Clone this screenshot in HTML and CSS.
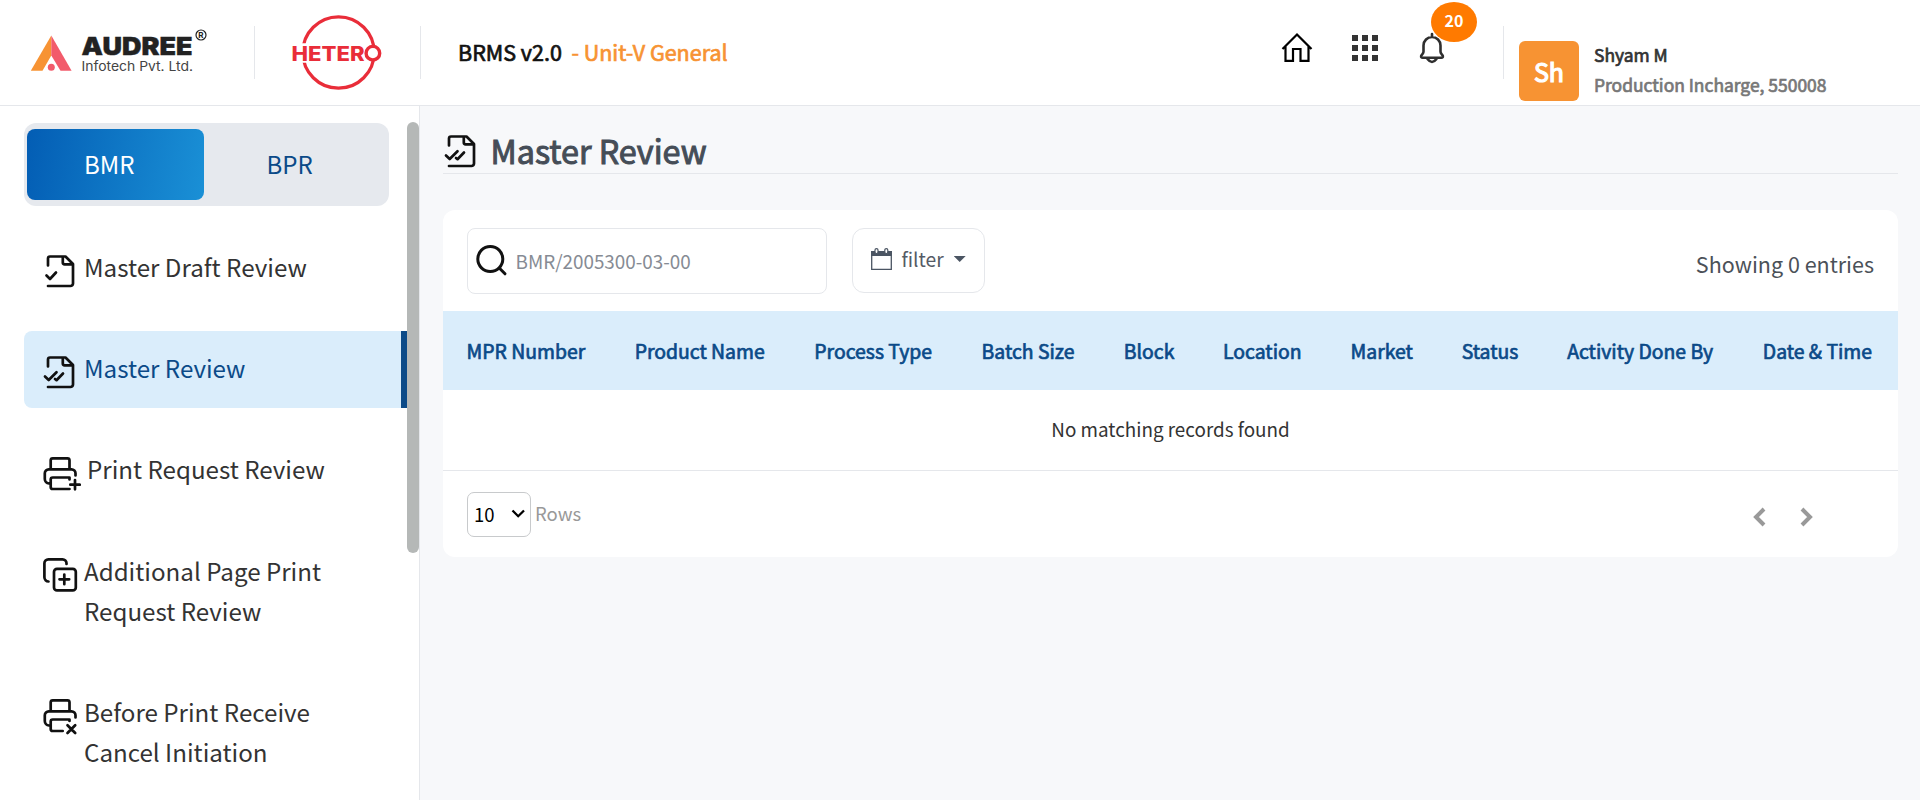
FILE: index.html
```html
<!DOCTYPE html>
<html lang="en">
<head>
<meta charset="utf-8">
<title>Master Review</title>
<link rel="stylesheet" href="styles.css">
</head>
<body>
<header class="topbar">
  <div class="brand">
    <svg class="audree" width="180" height="50" viewBox="28 26 180 50">
      <path d="M51.300 35.500L30.800 70.700H42.500L51.300 55.500Z" fill="#f79333"/>
      <path d="M51.300 35.500L71.600 70.700H60.500L51.300 55.500Z" fill="#f25b6b"/>
      <circle cx="51.300" cy="67.300" r="3.500" fill="#f25b6b"/>
      <text class="audree-name" x="81.500" y="54.500" textLength="111" lengthAdjust="spacingAndGlyphs">AUDREE</text>
      <text class="audree-sub" x="81.500" y="70.700" textLength="111.500" lengthAdjust="spacingAndGlyphs">Infotech Pvt. Ltd.</text>
      <circle cx="201" cy="35" r="5" fill="none" stroke="#222" stroke-width="1.200"/>
      <text class="audree-reg" x="201" y="38" text-anchor="middle">R</text>
    </svg>
  </div>
  <div class="brand brand-hetero">
    <svg width="92" height="78" viewBox="290 13 92 78">
      <circle cx="338.500" cy="52.500" r="35.700" fill="none" stroke="#e92d39" stroke-width="3.200"/>
      <path d="M290 43.200H364V62.800H290Z" fill="#fff"/>
      <text class="hetero-name" x="291.500" y="60.800" textLength="73" lengthAdjust="spacingAndGlyphs">HETER</text>
      <circle cx="372.900" cy="53.200" r="6.800" fill="#fff" stroke="#e92d39" stroke-width="3.400"/>
    </svg>
  </div>
  <div class="product"><span class="t-brms">BRMS v2.0</span><span class="t-unit">- Unit-V General</span></div>
  <nav class="tools">
    <svg class="tool" width="32" height="32" viewBox="0 0 32 32" fill="none" stroke="#000" stroke-width="2.200"><path d="M1.500 17L16 2.500L30.500 17M4.500 14V28.800H12V17H19.500V28.800H27.500V14"/></svg>
    <svg class="tool" width="26" height="26" viewBox="0 0 26 26" fill="#333"><path d="M0 0h6v6H0zM10 0h6v6h-6zM20 0h6v6h-6zM0 10h6v6H0zM10 10h6v6h-6zM20 10h6v6h-6zM0 20h6v6H0zM10 20h6v6h-6zM20 20h6v6h-6z"/></svg>
    <div class="bell">
      <svg width="26" height="32" viewBox="0 0 26 32" fill="none" stroke="#2f2f2f" stroke-width="2.600" stroke-linecap="round" stroke-linejoin="round"><path d="M13 2V5M4.500 19.500V13.500a8.500 8.500 0 0 1 17 0V19.500q0 1.200 1 2.500l1.300 1.800q.5 2-1.500 2H3.700q-2 0-1.500-2L3.500 22q1-1.300 1-2.500ZM8.500 27q4.500 6 9 0"/></svg>
      <span class="badge">20</span>
    </div>
  </nav>
  <div class="user">
    <div class="avatar">Sh</div>
    <div class="who"><div><span class="t-name">Shyam M</span></div><div><span class="t-role">Production Incharge, 550008</span></div></div>
  </div>
</header>
<div class="body">
  <aside class="side">
    <div class="side-main">
      <div class="toggle"><div class="tab tab-on"><span>BMR</span></div><div class="tab"><span>BPR</span></div></div>
      <ul class="menu">
        <li class="item">
          <svg class="ico" width="36" height="36" viewBox="0 0 36 36"><path d="M6 12.500V5.500a2 2 0 0 1 2-2H23.500L31 11V30.500a2.500 2.500 0 0 1-2.500 2.500H6M20.800 4V9.500a1.800 1.800 0 0 0 1.800 1.800H30.500M4.500 22.500L8 26L14 19.500"/></svg>
          <span class="lbl">Master Draft Review</span>
        </li>
        <li class="item item-on">
          <svg class="ico" width="36" height="36" viewBox="0 0 36 36"><path d="M6 12.500V5.500a2 2 0 0 1 2-2H23.500L31 11V30.500a2.500 2.500 0 0 1-2.500 2.500H6M20.800 4V9.500a1.800 1.800 0 0 0 1.800 1.800H30.500M3 22.500L6.700 26L14.500 18.200M13 25L14.500 26.200L21 19.500"/></svg>
          <span class="lbl">Master Review</span>
        </li>
        <li class="item">
          <svg class="ico" width="39" height="36" viewBox="0 0 39 36"><path d="M8.700 14.300V5.300a2 2 0 0 1 2-2H25.500a2 2 0 0 1 2 2V14.300M7 28.500a4.500 4.500 0 0 1-4.200-4.500V18.300a4 4 0 0 1 4-4H29.500a4 4 0 0 1 4 4V20.500M27.500 24.500V22.500H10.700a2 2 0 0 0-2 2V32a2 2 0 0 0 2 2H27.500M33 25V34.300M28.300 29.700H37.700"/></svg>
          <span class="lbl">Print Request Review</span>
        </li>
        <li class="item item-tall">
          <svg class="ico" width="36" height="36" viewBox="0 0 36 36"><path d="M6.500 25.500a4.300 4.300 0 0 1-4.100-4.200V7.300a4 4 0 0 1 4-4H20.500a4 4 0 0 1 4 4V8M22.300 18.500V28.200M17.500 23.300H27.200"/><rect x="12" y="12.800" width="21.800" height="21.600" rx="3"/></svg>
          <span class="lbl">Additional Page Print<br>Request Review</span>
        </li>
        <li class="item item-tall">
          <svg class="ico" width="36" height="38" viewBox="0 0 36 38"><path d="M8.700 14.300V5.300a2 2 0 0 1 2-2H25.500a2 2 0 0 1 2 2V14.300M7 28.500a4.500 4.500 0 0 1-4.200-4.500V18.300a4 4 0 0 1 4-4H29.500a4 4 0 0 1 4 4V20.500M27.500 24V22.500H10.700a2 2 0 0 0-2 2V32a2 2 0 0 0 2 2H20.700M25.500 28.200L33.200 36M33.200 28.200L25.500 36"/></svg>
          <span class="lbl">Before Print Receive<br>Cancel Initiation</span>
        </li>
      </ul>
    </div>
    <div class="scroll"><div class="thumb"></div></div>
  </aside>
  <main class="main">
    <div class="title">
      <svg class="ico" width="36" height="36" viewBox="0 0 36 36"><path d="M6 12.500V5.500a2 2 0 0 1 2-2H23.500L31 11V30.500a2.500 2.500 0 0 1-2.500 2.500H6M20.800 4V9.500a1.800 1.800 0 0 0 1.800 1.800H30.500M3 22.500L6.700 26L14.500 18.200M13 25L14.500 26.200L21 19.500"/></svg>
      <h1>Master Review</h1>
    </div>
    <section class="card">
      <div class="controls">
        <div class="search">
          <svg width="32" height="32" viewBox="0 0 32 32" fill="none" stroke="#111" stroke-width="3" stroke-linecap="round"><circle cx="14.300" cy="14" r="12.500"/><path d="M23.500 23.300L29 28.800"/></svg>
          <span class="t-ph">BMR/2005300-03-00</span>
        </div>
        <div class="filter">
          <svg width="21" height="23" viewBox="0 0 21 23"><path d="M.700 4h19.600V21.300H.700Z" fill="none" stroke="#4b5563" stroke-width="1.300"/><path d="M0 3h21v5H0z" fill="#4b5563"/><rect x="4" y=".600" width="3" height="5" rx="1.500" fill="#fff" stroke="#4b5563" stroke-width="1.200"/><rect x="13.800" y=".600" width="3" height="5" rx="1.500" fill="#fff" stroke="#4b5563" stroke-width="1.200"/></svg>
          <span class="t-filter">filter</span>
          <i class="caret"></i>
        </div>
        <span class="t-show">Showing 0 entries</span>
      </div>
      <table class="grid">
        <thead><tr><th>MPR Number</th><th>Product Name</th><th>Process Type</th><th>Batch Size</th><th>Block</th><th>Location</th><th>Market</th><th>Status</th><th>Activity Done By</th><th>Date &amp; Time</th></tr></thead>
        <tbody><tr><td colspan="10">No matching records found</td></tr></tbody>
      </table>
      <div class="pager">
        <div class="select"><span>10</span><svg width="14" height="10" viewBox="0 0 14 10" fill="none" stroke="#000" stroke-width="2.300"><path d="M1.500 1.500L7.200 7.200L13 1.500"/></svg></div>
        <span class="t-rows">Rows</span>
        <div class="arrows">
          <svg width="14" height="20" viewBox="0 0 14 20"><path d="M12 2L4 10L12 18"/></svg>
          <svg width="14" height="20" viewBox="0 0 14 20"><path d="M2 2L10 10L2 18"/></svg>
        </div>
      </div>
    </section>
  </main>
</div>
</body>
</html>
```
FILE: styles.css
```css
* { box-sizing: border-box; }
body {
  margin: 0;
  height: 800px;
  overflow: hidden;
  display: flex;
  flex-direction: column;
  background: #f7f8fa;
  color: #333;
  font-family: "Noto Sans CJK SC", "Noto Sans", sans-serif;
  white-space: nowrap;
}
.topbar {
  flex: none;
  height: 106px;
  display: flex;
  align-items: flex-start;
  background: #fff;
  border-bottom: 1px solid #e5e7eb;
}
.brand {
  width: 255px;
  height: 53px;
  margin-top: 26px;
  padding-left: 28px;
  border-right: 1px solid #e5e7eb;
}
.brand svg { display: block; }
.brand-hetero { width: 166px; padding-left: 35px; }
.brand-hetero svg { margin-top: -13px; }
.audree-name { font: 900 24.500px Inter, sans-serif; fill: #222; stroke: #222; stroke-width: .4px; }
.audree-sub { font: 400 13.300px Inter, sans-serif; fill: #444; }
.audree-reg { font: 700 8px Inter, sans-serif; fill: #222; }
.hetero-name { font: 800 20.200px Inter, sans-serif; fill: #e92d39; }
.product {
  width: 823px;
  padding-left: 37px;
  margin-top: 37px;
  display: flex;
  gap: 9.500px;
  font-size: 21.500px;
  line-height: 30px;
  color: #111;
}
.t-brms, .t-unit, .t-name, .t-role { -webkit-text-stroke: .7px currentColor; }
.t-unit { color: #f79333; }
.tools {
  width: 260px;
  height: 53px;
  margin-top: 26px;
  padding-left: 37px;
  border-right: 1px solid #e5e7eb;
  display: flex;
}
.tool { margin-top: 6px; }
.tool + .tool { margin: 9px 0 0 39px; }
.bell { position: relative; margin: 6px 0 0 41px; }
.badge {
  position: absolute;
  left: 12px;
  top: -30px;
  width: 46px;
  height: 40px;
  border-radius: 50%;
  background: #ff7a00;
  color: #fff;
  font-size: 16px;
  font-weight: 700;
  line-height: 36px;
  text-align: center;
}
.user { display: flex; padding-left: 15px; margin-top: 41px; }
.avatar {
  width: 60px;
  height: 60px;
  border-radius: 6px;
  background: #f79333;
  color: #fff;
  font-size: 25px;
  -webkit-text-stroke: 1.200px currentColor;
  line-height: 60px;
  text-align: center;
}
.who { margin: -1px 0 0 15px; line-height: 30px; font-size: 17.450px; }
.t-role { color: #777; }
.body { flex: 1; min-height: 0; display: flex; }
.side {
  width: 420px;
  display: flex;
  background: #fff;
  border-right: 1px solid #e5e7eb;
  overflow: hidden;
}
.side-main { width: 407px; padding: 17px 0 0 24px; }
.toggle {
  width: 365px;
  height: 83px;
  border-radius: 12px;
  background: #e6e9ee;
  padding: 6px 3px;
  display: flex;
}
.tab {
  width: 177px;
  height: 71px;
  border-radius: 8px;
  color: #0b4a88;
  font-size: 24px;
  line-height: 69px;
  padding-left: 62.500px;
}
.tab-on { background: linear-gradient(100deg, #035db4, #1a90d6); color: #fff; padding-left: 57px; }
.menu { list-style: none; margin: 24px 0 0; padding: 0; display: flex; flex-direction: column; gap: 24px; }
.item {
  padding: 17px 0 20px 18px;
  display: flex;
  align-items: flex-start;
  font-size: 24.150px;
  line-height: 40px;
}
.item-on {
  background: #daedfb;
  border-right: 6px solid #0b4a88;
  border-radius: 8px 0 0 8px;
  color: #0b4a88;
}
.ico { flex: none; fill: none; stroke: #111; stroke-width: 2.700; stroke-linecap: round; stroke-linejoin: round; }
.item .ico { margin: 6px 6px -6px 0; }
.item-tall { padding: 18px 0 19px 18px; }
.item-tall .ico { margin-top: 5px; }
.scroll { width: 12px; padding-top: 16px; }
.thumb { height: 431px; border-radius: 6px; background: #b5b8b7; }
.main { flex: 1; padding: 0 22px 0 23px; }
.title { height: 68px; border-bottom: 1px solid #e5e7eb; display: flex; padding-top: 27px; }
.title .ico { margin-left: -.5px; }
h1 {
  margin: -7px 0 0 12px;
  font-size: 32.300px;
  font-weight: 400;
  line-height: 48px;
  color: #454d57;
  -webkit-text-stroke: 1px currentColor;
}
.card { margin-top: 36px; height: 347px; background: #fff; border-radius: 12px; }
.controls { height: 101px; padding: 18px 24px 0; display: flex; align-items: flex-start; }
.search {
  width: 360px;
  height: 66px;
  border: 1px solid #e5e7eb;
  border-radius: 8px;
  display: flex;
  align-items: center;
  padding-left: 8px;
}
.t-ph { margin: -1px 0 0 7.500px; color: #868b94; font-size: 18.850px; line-height: 28px; }
.filter {
  width: 133px;
  height: 65px;
  margin-left: 25px;
  border: 1px solid #e5e7eb;
  border-radius: 12px;
  display: flex;
  padding: 19px 0 0 18px;
}
.t-filter { margin: -2.500px 0 0 9.500px; font-size: 19.300px; line-height: 26px; color: #555b66; }
.caret { margin: 8px 0 0 10px; width: 12px; height: 6px; background: #4b5563; clip-path: polygon(0 0, 100% 0, 50% 100%); }
.t-show { margin: 22px 0 0 auto; font-size: 21.500px; line-height: 28px; color: #4b5158; }
.grid { width: 100%; border-collapse: separate; border-spacing: 0; }
.grid th {
  height: 79px;
  padding: 0 24px 1px 23.500px;
  background: #daedfb;
  color: #0b4a88;
  font-size: 19.400px;
  font-weight: 400;
  text-align: left;
  -webkit-text-stroke: .7px currentColor;
}
.grid td { height: 81px; padding: 0 0 4px; text-align: center; font-size: 18.850px; border-bottom: 1px solid #e5e7eb; }
.pager { display: flex; padding: 21px 24px 0; line-height: 43px; font-size: 18.500px; }
.select {
  width: 64px;
  height: 45px;
  border: 1px solid #c8cacc;
  border-radius: 7px;
  color: #000;
  display: flex;
  align-items: center;
  justify-content: space-between;
  padding: 0 5px 1px 6px;
}
.t-rows { margin-left: 4px; color: #999; }
.arrows { margin: 15px 60.500px 0 auto; display: flex; gap: 34px; fill: none; stroke: #999; stroke-width: 4; }
```
